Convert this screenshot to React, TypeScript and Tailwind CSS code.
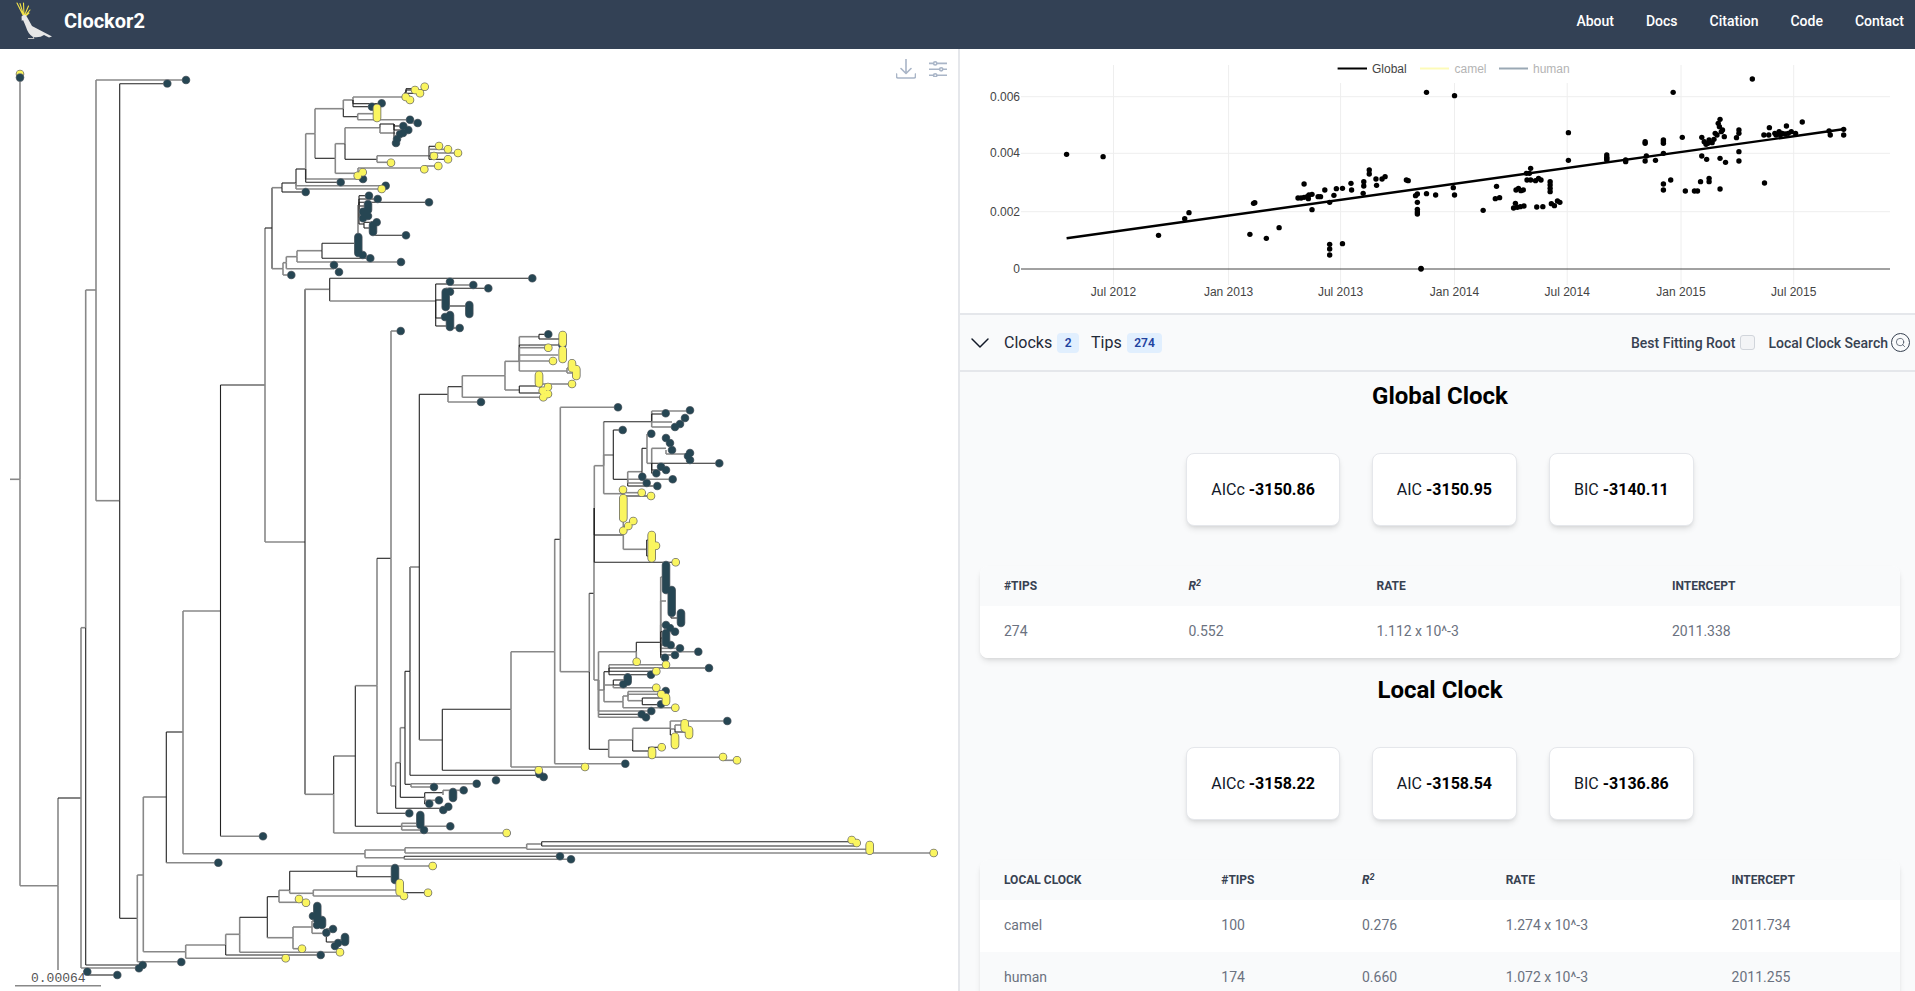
import React from 'react';
import { ChevronDown, Search } from 'lucide-react';

// elbows: [parentX, parentY, childY, childX, colour]
// colour 0 black, 1 gray, 2 gray vertical + black horizontal, 3 black vertical + gray horizontal
const BRANCHES: number[][] = [
  [10, 479.3, 479.3, 20, 1], [20, 479.3, 77, 20, 1], [20, 479.3, 885.7, 58, 1],
  [58, 885.7, 798, 81, 2], [58, 885.7, 970, 58, 1], [87, 972, 975, 117, 0],
  [81, 798, 627.7, 85.7, 1], [81, 798, 968, 139, 1], [85.7, 627.7, 290, 96, 1], [85.7, 627.7, 965, 142, 0],
  [96, 290, 80, 186, 1], [96, 290, 500.7, 119.7, 1], [119.7, 500.7, 83.7, 167, 0], [119.7, 500.7, 918.3, 137.3, 0],
  [137.3, 918.3, 875, 143.3, 1], [137.3, 918.3, 961.7, 181, 1], [143.3, 875, 797, 166.3, 1], [143.3, 875, 951.7, 185.7, 1],
  [166.3, 797, 732, 183, 0], [166.3, 797, 862.7, 218, 3], [183, 732, 611, 220.5, 1], [183, 732, 853.7, 365, 1],
  [220.5, 611, 385, 265, 0], [220.5, 611, 836.3, 263, 3], [265, 385, 228, 272, 2], [265, 385, 542, 305, 1],
  // upper clade
  [272, 228, 187.7, 282, 3], [272, 228, 268.7, 283, 3], [282, 187.7, 183, 296, 0], [282, 187.7, 192, 305, 0],
  [296, 183, 169, 305.7, 0], [296, 183, 185.7, 385, 1], [296, 183, 189, 382, 1],
  [305.7, 169, 133.7, 315, 1], [305.7, 169, 179, 363, 1], [305.7, 169, 182.3, 340.7, 0],
  [315, 133.7, 108.7, 343.3, 1], [315, 133.7, 158.3, 335.3, 2], [343.3, 108.7, 100, 353, 1], [343.3, 108.7, 116.7, 357.7, 0],
  [353, 100, 97, 405, 1], [353, 100, 103.7, 381.7, 0], [353, 100, 106.7, 372, 0],
  [405, 97, 92, 406, 0], [406, 92, 88.7, 415, 0], [406, 92, 90, 424, 0], [406, 92, 93.3, 420, 0], [405, 97, 100, 410, 0],
  [357.7, 116.7, 113.7, 377, 1], [357.7, 116.7, 119.7, 410, 1], [410, 119.7, 123, 417, 1],
  [335.3, 158.3, 143.7, 345, 1], [335.3, 158.3, 173.3, 358, 1], [345, 143.7, 127.7, 380, 1], [345, 143.7, 159.3, 377, 0],
  [380, 127.7, 124, 394, 0], [380, 127.7, 133, 395, 1], [394, 124, 126, 403, 0], [394, 124, 130, 408, 0], [394, 124, 140, 396, 0],
  [377, 159.3, 155.7, 429, 1], [377, 159.3, 162.3, 391, 1], [429, 155.7, 146.3, 439, 0], [429, 155.7, 149.3, 448, 1],
  [429, 155.7, 153, 458, 1], [429, 155.7, 156, 434, 0], [429, 155.7, 159.3, 448, 0],
  [358, 173.3, 168, 424, 1], [424, 168, 166, 438, 1],
  [283, 268.7, 262.7, 286.3, 1], [283, 268.7, 275, 291.3, 1], [286.3, 262.7, 256.7, 297, 1], [286.3, 262.7, 268.7, 334, 1],
  [297, 256.7, 250.7, 322, 1], [297, 256.7, 262, 401, 1], [322, 250.7, 243.3, 358, 0], [322, 250.7, 258.3, 370, 0],
  [358, 243.3, 205, 359, 1], [359, 205, 195.7, 369, 0], [359, 205, 199, 377.7, 0], [359, 205, 202.3, 429, 0], [359, 205, 206, 368, 0],
  [359, 205, 212, 363, 1], [359, 205, 218, 363, 1], [359, 205, 224, 364, 0], [364, 224, 222.3, 376.7, 0], [364, 224, 228, 373, 0], [373, 232, 235.3, 406, 0],
  // middle clade
  [305, 542, 289.3, 329.7, 3], [305, 542, 794.3, 333.7, 3], [329.7, 289.3, 278.3, 532, 0], [329.7, 289.3, 301, 435.7, 3],
  [435.7, 301, 284, 450, 0], [450, 284, 285, 473, 1], [435.7, 301, 300, 446, 0], [446, 300, 288.3, 488, 0], [446, 300, 306, 469, 0],
  [435.7, 301, 318, 445, 0], [435.7, 301, 326, 450, 0], [450, 326, 328, 460, 0],
  [333.7, 794.3, 756, 355.3, 3], [333.7, 794.3, 833, 506.7, 1], [355.3, 756, 685.7, 377, 3], [355.3, 756, 826.3, 401.7, 0],
  [377, 685.7, 558.3, 391, 2], [377, 685.7, 813.3, 409.3, 2], [391, 558.3, 331, 400.7, 1], [391, 558.3, 786, 395.7, 1],
  [395.7, 786, 762.7, 400.3, 1], [395.7, 786, 808.3, 443, 0], [400.3, 762.7, 727.7, 405, 1], [400.3, 762.7, 797.3, 424.7, 0],
  [424.7, 797.3, 792.7, 443, 0], [424.7, 797.3, 804, 429.3, 0], [424.7, 797.3, 800.3, 439, 1], [443, 795, 790.3, 463.7, 1],
  [401.7, 826.3, 823.3, 420, 1], [401.7, 826.3, 830, 424, 1], [401.7, 826.3, 826.3, 450, 1],
  [405, 727.7, 671.3, 410, 0], [405, 727.7, 784.3, 411, 0], [411, 784.3, 783.7, 476.7, 1], [411, 784.3, 787, 434, 1],
  [410, 671.3, 567, 419.3, 3], [410, 671.3, 775.3, 539, 0], [419.3, 567, 394.3, 448, 0], [419.3, 567, 740, 442.3, 3],
  [442.3, 740, 709.3, 511, 0], [442.3, 740, 770.3, 539, 0], [448, 394.3, 386.7, 462.3, 2], [448, 394.3, 402, 482, 1],
  [462.3, 386.7, 375.7, 505, 1], [462.3, 386.7, 397.3, 543, 1], [505, 375.7, 361.3, 519.3, 1], [505, 375.7, 390, 519.3, 1],
  [519.3, 361.3, 336.7, 539, 1], [539, 336.7, 334.3, 548, 0], [539, 336.7, 339, 562, 0], [519.3, 361.3, 345, 562, 0],
  [519.3, 361.3, 347.7, 548, 1], [519.3, 361.3, 355, 558, 1], [519.3, 361.3, 361, 553, 1], [519.3, 361.3, 371, 567, 1],
  [567, 371, 368, 572, 1], [567, 371, 373, 576, 1], [519.3, 390, 386, 539, 0], [519.3, 390, 393, 543, 0], [540, 388, 384, 572, 1],
  [511, 709.3, 651.7, 554.7, 1], [511, 709.3, 767, 585, 1], [554.7, 651.7, 539.3, 560.3, 2], [554.7, 651.7, 763.7, 625.3, 1],
  [560.3, 539.3, 407.3, 618, 1], [560.3, 539.3, 671.7, 589.3, 1], [589.3, 671.7, 593.3, 594, 2], [589.3, 671.7, 749.3, 608.7, 0],
  [594, 593.3, 508, 594.3, 1], [594, 593.3, 680, 598.5, 1], [594.3, 508, 465.7, 603.7, 1], [594.3, 508, 535, 623.3, 0], [594.3, 508, 562.3, 675.7, 0],
  [603.7, 465.7, 421.7, 651.7, 2], [603.7, 465.7, 455, 613.3, 1], [603.7, 465.7, 493.7, 623, 1],
  [651.7, 421.7, 411, 690, 1], [651.7, 421.7, 414, 666, 0], [651.7, 421.7, 422, 672, 1], [651.7, 421.7, 427, 675, 1],
  [613.3, 455, 430, 623, 0], [613.3, 455, 479.3, 627.7, 0], [627.7, 479.3, 471.7, 642, 1], [627.7, 479.3, 486, 657, 0],
  [642, 471.7, 448.3, 647, 0], [642, 471.7, 477, 642, 0], [647, 448.3, 434, 651, 1], [647, 448.3, 463.3, 651.7, 1],
  [651.7, 463.3, 448.3, 666, 1], [651.7, 463.3, 463.3, 719, 0], [651.7, 463.3, 470, 666, 0], [651.7, 463.3, 473.3, 656, 0],
  [666, 450, 454, 690, 1], [627.7, 479.3, 483, 647, 1], [627.7, 479.3, 479.3, 672.7, 1],
  [623.3, 535, 515, 623.3, 1], [623.3, 535, 549.3, 646.7, 1], [623, 493.7, 490, 623, 1], [623, 493.7, 496, 651, 0], [623, 493.7, 492.7, 641.7, 1],
  [646.7, 549.3, 540, 651.7, 0], [646.7, 549.3, 556, 651.7, 0],
  [598.5, 680, 651.7, 636.3, 1], [598.5, 680, 690, 604, 1], [598.5, 680, 711, 651, 1], [598.5, 680, 714.3, 641.7, 0], [598.5, 680, 717.3, 646, 1],
  [636.3, 651.7, 642.3, 660.7, 0], [636.3, 651.7, 661.7, 636.7, 1], [660.7, 642.3, 577, 665.7, 1], [660.7, 642.3, 601, 666, 1], [660.7, 642.3, 625, 666, 1],
  [660.7, 642.3, 631.7, 675, 0], [660.7, 642.3, 638, 666, 0], [660.7, 642.3, 645, 670, 0], [660.7, 642.3, 648.3, 680, 1],
  [660.7, 642.3, 651.7, 698, 1], [660.7, 642.3, 655, 675, 0], [660.7, 642.3, 657.7, 665, 0], [671, 612, 618, 681, 0],
  [604, 690, 671.7, 609, 0], [604, 690, 685, 613.3, 1], [604, 690, 701.7, 623, 1], [609, 671.7, 664.7, 666, 1], [609, 671.7, 668, 709, 0],
  [609, 671.7, 671.3, 656, 0], [609, 671.7, 674.7, 651, 0], [613.3, 685, 680, 627, 0], [613.3, 685, 685, 623, 0], [613.3, 685, 687.7, 656, 1],
  [623, 701.7, 696, 628, 1], [623, 701.7, 707.7, 675.3, 1], [628, 696, 691.5, 665, 1], [628, 696, 694.3, 661, 1], [628, 696, 700.7, 642.3, 1],
  [642.3, 700.7, 698, 664, 0], [642.3, 700.7, 704.7, 661, 0],
  [608.7, 749.3, 740, 632.7, 1], [608.7, 749.3, 757.3, 723, 1], [723, 757.3, 760.3, 737, 1], [632.7, 740, 728.3, 670.3, 1], [632.7, 740, 751, 648.7, 0],
  [648.7, 751, 747.3, 661.7, 0], [648.7, 751, 753, 652, 0], [670.3, 728.3, 721, 727, 1], [670.3, 728.3, 735, 675, 0], [670.3, 728.3, 729, 675, 1],
  [675, 729, 725, 684.7, 1], [675, 729, 732, 689, 0],
  // long branches
  [365, 853.7, 850, 405, 1], [365, 853.7, 857.7, 404.3, 1], [405, 850, 847.7, 526.7, 1], [405, 850, 853, 933, 1],
  [526.7, 847.7, 844, 541.7, 1], [526.7, 847.7, 849.3, 869, 1], [541.7, 844, 841.7, 851, 0], [541.7, 844, 846, 856, 0],
  [404.3, 857.7, 856.3, 560, 0], [404.3, 857.7, 859.3, 571, 1],
  // lower clade
  [185.7, 951.7, 945, 225.7, 1], [185.7, 951.7, 958.3, 285.7, 1], [225.7, 945, 934.3, 239.7, 1], [225.7, 945, 955, 320.7, 0],
  [239.7, 934.3, 917.3, 267.3, 2], [239.7, 934.3, 952.3, 340, 1], [267.3, 917.3, 896.7, 279, 0], [267.3, 917.3, 937.7, 293, 3],
  [279, 896.7, 890.3, 289.7, 1], [279, 896.7, 902.3, 306, 1], [289.7, 890.3, 871.3, 356.7, 0], [289.7, 890.3, 893.3, 313.3, 1],
  [356.7, 871.3, 866, 432.7, 1], [356.7, 871.3, 876.7, 395, 0], [313.3, 893.3, 890, 396.7, 1], [313.3, 893.3, 896, 404, 1], [396.7, 890, 892.7, 428, 0],
  [293, 937.7, 927, 312, 1], [293, 937.7, 948.7, 302, 1], [312, 927, 921, 322, 1], [312, 927, 933.3, 326.3, 1],
  [326.3, 933.3, 929, 333, 0], [326.3, 933.3, 942, 338, 0], [338, 942, 940, 345, 0],
];

// tips: [x, y] or [x, y1, y2] for a run of tips that merge into a capsule
const DARK_TIPS: number[][] = [
  [186, 80], [167.3, 83.5], [142.7, 965], [139, 968.3], [87.3, 971.7], [117.3, 975], [181.3, 962], [218.3, 862.7], [263, 836.3],
  [385.7, 185.7], [363, 179], [340.7, 182.3], [305.7, 192], [372, 106.7], [381.7, 103.3], [410, 119.7], [417.7, 123],
  [403.3, 126], [408.3, 130], [403, 133], [400, 134], [397, 139], [396, 143],
  [369, 195.7], [377.7, 199], [429, 202.3], [368, 204, 210], [363, 211.7], [363, 218.3], [368, 216], [376.7, 222.3], [373, 225, 232], [406, 235.3],
  [358.3, 237, 253], [362.7, 255], [370.3, 258.3], [401, 262], [334, 265], [339, 272], [291.3, 275],
  [450, 281.7], [473.3, 285], [532.3, 278.3], [488.3, 288.3], [450, 291.7], [445.7, 292, 307], [469.3, 305, 314], [450, 315, 327], [445, 317], [459.7, 328], [400.7, 331],
  [481, 402], [548.3, 334.3], [562.3, 345],
  [618, 407.3], [690, 410.3], [665.7, 413.3], [685, 418], [680, 424], [675, 427], [622.7, 430], [651.3, 433.7], [666, 438], [670, 443], [672, 450],
  [690, 453], [688, 456], [690, 460], [719.3, 463.3], [661, 466.7], [666, 470], [656.3, 473.3], [642.3, 476.7], [672.7, 479.3], [646.7, 483], [657.3, 486],
  [666, 565, 590], [671.7, 590, 613], [681, 613, 623], [666, 625], [670, 628], [675, 631.7], [666, 633, 643], [670.7, 645], [680, 648.3], [698.3, 651.7], [675, 655], [665, 657.7],
  [709, 668], [651, 674.7], [627.7, 677.3, 681.7], [623.3, 684.3], [665.7, 691], [661, 704.3], [651.3, 711], [641.7, 714.3], [646, 717.3], [727.3, 721],
  [625.3, 763.7], [539.3, 774], [543.7, 777], [496, 780.3], [476.7, 783.7], [434, 787], [463.7, 790.3], [453, 792, 798], [439, 800.3], [429.3, 803.7],
  [448.3, 806.7], [443.3, 810], [409.3, 813.3], [420.3, 815, 825], [450.3, 826.3], [424, 830], [560, 856.3], [571, 859.3],
  [395, 868, 880], [317.3, 906, 920], [313, 916], [322, 920, 925], [317, 925], [326.3, 932.7], [333, 929], [345, 937, 942], [338, 943], [335, 946], [320.7, 955],
];

const YELLOW_TIPS: number[][] = [
  [20, 74], [415, 90], [424.7, 86.7], [420, 93.3], [405.7, 97], [410, 100], [377, 108, 118],
  [439, 146], [448, 149.3], [458, 153], [434, 156], [448, 159.3], [391, 162.7], [438.3, 166], [424.3, 169.3], [362.7, 172.3], [357.7, 175.7], [381.7, 189],
  [562.7, 335, 343], [548.3, 347.7], [562.7, 350, 359], [553, 361], [572, 363.3, 368.3], [576.3, 369.3, 376], [539, 375, 383.3], [572, 384], [548, 387], [542.7, 390.7], [548, 394], [543.3, 397.3],
  [623, 489.7], [641.7, 492.7], [651, 496], [623.3, 498.3, 518.3], [633.3, 521], [628.3, 526], [623.3, 530.7], [651.7, 535, 558.3], [656, 545.7], [675.7, 562.3],
  [636.7, 661.7], [666, 664.7], [656.3, 671.3], [656.3, 687.7], [661.3, 694.3], [666, 697.3, 701.7], [675.3, 707.7], [684.7, 723.3, 728.3], [689, 730, 735], [675, 736.7, 745],
  [661.7, 747.3], [652, 750.7, 755], [723, 757], [737, 760.3], [585, 767], [538.7, 770.3], [506.7, 833], [851.7, 840], [856.7, 843], [869.7, 845, 850.7], [933.7, 853],
  [432.7, 866], [399.7, 883, 892], [428, 892.7], [404, 896], [299, 899], [306, 902.7], [302, 948.7], [340, 952.3], [285.7, 958.3],
];

const tipPath = (tips: number[][]) =>
  tips.map((t) => `M${t[0]} ${t[1]}V${t.length > 2 ? t[2] : t[1] + 0.01}`).join('');

function Tree() {
  const colour = (gray: boolean) => (gray ? { stroke: '#888888', strokeWidth: 1.6 } : { stroke: '#222222', strokeWidth: 1.1 });
  return (
    <svg className="absolute inset-0 h-full w-full" viewBox="0 49 958 942" fill="none">
      {BRANCHES.map(([px, py, cy, cx, c], i) => (
        <g key={i}>
          <path d={`M${px} ${py}V${cy}`} {...colour(c === 1 || c === 2)} />
          <path d={`M${px} ${cy}H${cx}`} {...colour(c === 1 || c === 3)} />
        </g>
      ))}
      <path d={tipPath(DARK_TIPS)} stroke="#6b7178" strokeWidth={8.6} strokeLinecap="round" />
      <path d={tipPath(DARK_TIPS)} stroke="#264653" strokeWidth={7.2} strokeLinecap="round" />
      <path d={tipPath(YELLOW_TIPS)} stroke="#73736a" strokeWidth={8.6} strokeLinecap="round" />
      <path d={tipPath(YELLOW_TIPS)} stroke="#faf55f" strokeWidth={6.9} strokeLinecap="round" />
      {/* the very first tip sits half over the yellow one */}
      <path d="M20 77.6V77.61" stroke="#6b7178" strokeWidth={8.6} strokeLinecap="round" />
      <path d="M20 77.6V77.61" stroke="#264653" strokeWidth={7.2} strokeLinecap="round" />
      <text x={31} y={982} fontFamily="'Liberation Mono', monospace" fontSize={13} fill="#555555">0.00064</text>
      <path d="M15 985.7H101" stroke="#888888" strokeWidth={1.6} />
    </svg>
  );
}

function ToolIcons() {
  return (
    <div className="absolute top-[10px] left-[896px] flex items-start gap-[13px]">
      <svg width="20" height="20" viewBox="0 0 20 20" fill="none" stroke="#a9b5c7" strokeWidth="1.6" strokeLinecap="round" strokeLinejoin="round">
        <path d="M10 0.5V14M5 9.5L10 14.5L15 9.5" />
        <path d="M0.5 15V17.5Q0.5 19 2 19H18Q19.5 19 19.5 17.5V15" />
      </svg>
      <svg className="mt-[2px]" width="18" height="16" viewBox="0 0 18 16" fill="none" stroke="#a9b5c7" strokeWidth="1.6">
        <path d="M0 2.4H4.5M8 2.4H18M0 8.3H10.5M14 8.3H18M0 14.3H4.5M8 14.3H18" />
        <circle cx="6.2" cy="2.4" r="1.6" />
        <circle cx="12.2" cy="8.3" r="1.6" />
        <circle cx="6.2" cy="14.3" r="1.6" />
      </svg>
    </div>
  );
}

// sample positions taken off a 1.642 x 3 enlargement of the plot
const POINTS: number[][] = [
  [175, 463], [235, 470], [326, 706], [369, 656], [376, 638], [476, 703], [482, 610], [484, 608], [503, 715], [524, 683], [565, 552], [555, 594], [560, 594], [565, 592],
  [570, 590], [573, 585], [578, 583], [572, 596], [578, 629], [588, 590], [592, 590], [599, 570], [607, 607], [607, 733], [607, 747], [607, 765], [614, 586], [618, 566],
  [628, 565], [628, 731], [642, 550], [643, 570], [662, 580], [663, 545], [663, 558], [672, 510], [672, 522], [683, 537], [684, 556], [693, 537], [698, 530], [733, 540],
  [736, 542], [748, 587], [751, 582], [751, 607], [751, 628], [751, 636], [751, 642], [766, 277], [766, 581], [781, 585], [757, 807], [812, 287], [810, 563], [812, 585],
  [859, 631], [881, 559], [879, 596], [886, 593], [909, 624], [912, 610], [915, 622], [920, 620], [926, 618], [913, 570], [917, 565], [921, 572], [925, 570], [930, 520],
  [935, 520], [937, 505], [931, 540], [937, 540], [945, 542], [950, 535], [954, 540], [969, 545], [969, 555], [969, 565], [969, 575], [947, 621], [957, 620], [971, 611],
  [976, 617], [981, 603], [985, 607], [999, 398], [999, 481], [1062, 465], [1062, 472], [1062, 480], [1093, 480], [1125, 430], [1125, 483], [1127, 468], [1142, 481],
  [1155, 420], [1155, 430], [1155, 460], [1155, 552], [1155, 570], [1167, 540], [1171, 277], [1186, 412], [1191, 573], [1206, 573], [1211, 573], [1216, 545], [1218, 468],
  [1226, 478], [1218, 412], [1222, 425], [1225, 433], [1230, 420], [1235, 428], [1240, 400], [1247, 380], [1245, 370], [1248, 358], [1252, 390], [1255, 410], [1230, 535],
  [1230, 545], [1248, 475], [1248, 567], [1257, 487], [1275, 413], [1279, 390], [1279, 400], [1279, 455], [1279, 483], [1301, 237], [1321, 549], [1320, 405], [1328, 405],
  [1329, 383], [1340, 405], [1345, 395], [1350, 400], [1357, 378], [1360, 400], [1365, 395], [1372, 400], [1383, 366], [1427, 393], [1429, 405], [1451, 388], [1451, 405],
  [1243, 405], [1250, 395], [1238, 418], [1228, 430], [1338, 400], [1347, 405], [1355, 402], [1125, 425], [1155, 425], [1062, 476], [1093, 485], [757, 805],
];

function Chart() {
  const xTicks = [
    [1113.5, 'Jul 2012'], [1228.6, 'Jan 2013'], [1340.6, 'Jul 2013'], [1454.5, 'Jan 2014'],
    [1567.2, 'Jul 2014'], [1681, 'Jan 2015'], [1793.7, 'Jul 2015'],
  ] as const;
  const yTicks = [[96.7, '0.006'], [153.3, '0.004'], [211.7, '0.002']] as const;
  const font = { fontFamily: "'Liberation Sans', Arial, sans-serif", fontSize: 12 };
  return (
    <svg className="h-[264px] w-full shrink-0" viewBox="960 49 955 264" fill="none">
      {xTicks.map(([x]) => <path key={x} d={`M${x} 65V285`} stroke="#eeeeee" />)}
      {yTicks.map(([y]) => <path key={y} d={`M1021 ${y}H1890`} stroke="#eeeeee" />)}
      <rect x={1331} y={65} width={244} height={18} fill="#ffffff" />
      <path d="M1021 269H1890" stroke="#444444" />
      {POINTS.map(([x, y], i) => <circle key={i} cx={960 + x / 1.642} cy={y / 3} r={2.7} fill="#000000" />)}
      <path d="M1066.6 238.3L1843 129.3" stroke="#000000" strokeWidth={2.4} />
      {xTicks.map(([x, label]) => <text key={x} x={x} y={296} textAnchor="middle" fill="#444444" {...font}>{label}</text>)}
      {yTicks.map(([y, label]) => <text key={y} x={1020} y={y + 4} textAnchor="end" fill="#444444" {...font}>{label}</text>)}
      <text x={1020} y={273} textAnchor="end" fill="#444444" {...font}>0</text>
      <path d="M1337.6 68.5H1367" stroke="#000000" strokeWidth={2} />
      <text x={1372} y={73} fill="#444444" {...font}>Global</text>
      <path d="M1420 68.5H1449" stroke="#fdfbb8" strokeWidth={2} />
      <text x={1454.5} y={73} fill="#b4b4b4" {...font}>camel</text>
      <path d="M1499 68.5H1528" stroke="#9aa8b4" strokeWidth={2} />
      <text x={1533} y={73} fill="#b4b4b4" {...font}>human</text>
    </svg>
  );
}

function Badge({ children }: { children: React.ReactNode }) {
  return <span className="ml-[5px] flex h-5 items-center rounded bg-[#e1effe] px-[7.5px] text-xs font-semibold text-[#1e429f]">{children}</span>;
}

function ClockBar() {
  return (
    <div className="flex h-[57px] shrink-0 items-center border-b-2 border-[#e5e7eb] bg-[#f9fafb] pr-[5px] pl-[4px]">
      <ChevronDown className="h-8 w-8 text-[#111827]" strokeWidth={1.1} />
      <span className="ml-[8px] text-base text-[#1f2937]">Clocks</span>
      <Badge>2</Badge>
      <span className="ml-3 text-base text-[#1f2937]">Tips</span>
      <Badge>274</Badge>
      <div className="ml-auto flex items-center text-sm font-medium text-[#374151]">
        <span>Best Fitting Root</span>
        <span className="ml-[5px] h-[15px] w-[15px] rounded-[3px] border border-[#d1d5db] bg-[#f3f4f6]" />
        <span className="ml-[13px]">Local Clock Search</span>
        <span className="ml-[3px] flex h-[19px] w-[19px] items-center justify-center rounded-full border border-[#374151]">
          <Search className="h-[11px] w-[11px]" strokeWidth={1.5} />
        </span>
      </div>
    </div>
  );
}

function StatCards({ stats }: { stats: string[][] }) {
  return (
    <div className="mt-[41px] flex shrink-0 justify-center gap-8 pl-[5px]">
      {stats.map(([name, value]) => (
        <div key={name} className="flex h-[73px] items-center rounded-lg border border-[#e5e7eb] bg-white px-6 text-base text-[#111827] shadow-md">
          <span>{name}&nbsp;<b className="font-bold text-black">{value}</b></span>
        </div>
      ))}
    </div>
  );
}

function R2() {
  return <i>R<sup className="text-[9px]">2</sup></i>;
}

function StatsTable({ widths, head, rows }: { widths: number[]; head: React.ReactNode[]; rows: string[][] }) {
  return (
    <div className="mt-10 mr-[15px] ml-[20px] shrink-0 overflow-hidden rounded-lg bg-white shadow-md">
      <table className="w-full table-fixed text-left text-sm text-[#6b7280]">
        <colgroup>
          {widths.map((w, i) => <col key={i} style={{ width: w }} />)}
        </colgroup>
        <thead className="bg-[#f9fafb] text-xs text-[#374151] uppercase">
          <tr>
            {head.map((h, i) => <th key={i} className="h-10 px-6 font-bold">{h}</th>)}
          </tr>
        </thead>
        <tbody>
          {rows.map((row, r) => (
            <tr key={r} className={r % 2 === 0 ? 'bg-white' : 'bg-[#f9fafb]'}>
              {row.map((cell, i) => <td key={i} className="h-[52px] px-6 pb-[2px]">{cell}</td>)}
            </tr>
          ))}
        </tbody>
      </table>
    </div>
  );
}

function Logo() {
  return (
    <svg width="38" height="38" viewBox="0 0 38 38" fill="none" className="shrink-0">
      <g stroke="#f2e24a" strokeWidth="1.1" strokeLinecap="round">
        <path d="M7 13L1 1M7.5 13L4 1.5M8 13L7.5 1M8.5 13.5L12.5 4M9 14L14 8M9 14.5L13 11" />
      </g>
      <path d="M5.5 14.5Q9 11 11 15L16 24L36 34.5L33 35.5L28 33Q24 36 17 35Q12 32 10 25Q8 20 7 18L5.8 19Z" fill="#e6e6e6" />
      <path d="M17 34.5L18 36.5H12" stroke="#bdbdbd" strokeWidth="1" />
    </svg>
  );
}

export default function App() {
  return (
    <div className="flex h-screen w-full flex-col overflow-hidden bg-white font-['Roboto',sans-serif]">
      <nav className="flex h-[49px] shrink-0 items-center bg-[#334155] pr-[11px] pb-[7px] pl-[16px] text-white">
        <Logo />
        <span className="ml-[10px] text-xl font-bold">Clockor2</span>
        <ul className="ml-auto flex gap-8 text-sm font-medium">
          <li>About</li>
          <li>Docs</li>
          <li>Citation</li>
          <li>Code</li>
          <li>Contact</li>
        </ul>
      </nav>
      <div className="flex min-h-0 flex-1">
        <div className="relative w-[960px] shrink-0 border-r-2 border-[#e5e7eb]">
          <Tree />
          <ToolIcons />
        </div>
        <div className="flex min-w-0 flex-1 flex-col overflow-hidden bg-[#f9fafb]">
          <div className="shrink-0 border-b-2 border-[#e5e7eb] bg-white">
            <Chart />
          </div>
          <ClockBar />
          <h2 className="mt-2 shrink-0 pl-[5px] text-center text-2xl font-bold text-black">Global Clock</h2>
          <StatCards stats={[['AICc', '-3150.86'], ['AIC', '-3150.95'], ['BIC', '-3140.11']]} />
          <StatsTable
            widths={[184.4, 188, 295.4, 252]}
            head={['#Tips', <R2 key="r2" />, 'Rate', 'Intercept']}
            rows={[['274', '0.552', '1.112 x 10^-3', '2011.338']]}
          />
          <h2 className="mt-4 shrink-0 pl-[5px] text-center text-2xl font-bold text-black">Local Clock</h2>
          <StatCards stats={[['AICc', '-3158.22'], ['AIC', '-3158.54'], ['BIC', '-3136.86']]} />
          <StatsTable
            widths={[217.3, 140.7, 143.7, 225.9, 192.4]}
            head={['Local Clock', '#Tips', <R2 key="r2" />, 'Rate', 'Intercept']}
            rows={[
              ['camel', '100', '0.276', '1.274 x 10^-3', '2011.734'],
              ['human', '174', '0.660', '1.072 x 10^-3', '2011.255'],
            ]}
          />
        </div>
      </div>
    </div>
  );
}
